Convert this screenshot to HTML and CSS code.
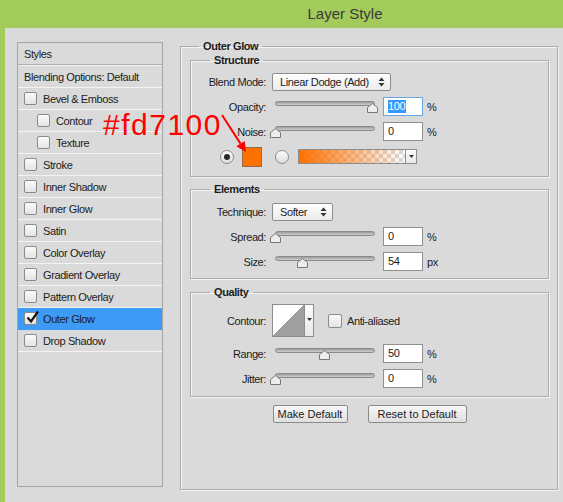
FILE: index.html
```html
<!DOCTYPE html>
<html>
<head>
	<meta charset="utf-8">
	<title>Layer Style</title>
	<link rel="stylesheet" href="styles.css">
</head>
<body>
<div class="window">
	<div class="titlebar">Layer Style</div>

	<div class="frame">
		<!-- effect list -->
		<ul class="styles-list">
			<li class="head">Styles</li>
			<li class="blend">Blending Options: Default</li>
			<li><span class="check"></span>Bevel &amp; Emboss</li>
			<li class="sub"><span class="check"></span>Contour</li>
			<li class="sub"><span class="check"></span>Texture</li>
			<li><span class="check"></span>Stroke</li>
			<li><span class="check"></span>Inner Shadow</li>
			<li><span class="check"></span>Inner Glow</li>
			<li><span class="check"></span>Satin</li>
			<li><span class="check"></span>Color Overlay</li>
			<li><span class="check"></span>Gradient Overlay</li>
			<li><span class="check"></span>Pattern Overlay</li>
			<li class="selected">
				<span class="check"><svg class="tick" width="15" height="15" viewBox="0 0 15 15"><path d="M2.5 7.5 L6 11.5 L13 1.5" fill="none" stroke="#161616" stroke-width="2.2"/></svg></span>Outer Glow
			</li>
			<li><span class="check"></span>Drop Shadow</li>
		</ul>

		<!-- settings -->
		<fieldset class="group main">
			<legend>Outer Glow</legend>

			<fieldset class="group structure">
				<legend>Structure</legend>
				<div class="field">
					<label>Blend Mode:</label>
					<div class="select blend-mode">Linear Dodge (Add)
						<svg class="updown" width="7" height="10" viewBox="0 0 7 10"><path d="M3.5 0.5 L6.5 4 H0.5 Z M3.5 9.5 L6.5 6 H0.5 Z" fill="#333"/></svg>
					</div>
				</div>
				<div class="field">
					<label>Opacity:</label>
					<div class="slider">
						<div class="track"></div>
						<svg class="thumb" style="left:92px" width="11" height="10" viewBox="0 0 11 10"><path d="M5.5 0.5 L10.5 4.5 V9.5 H0.5 V4.5 Z" fill="#ededed" stroke="#777"/></svg>
					</div>
					<div class="num focus"><span class="sel">100</span></div>
					<span class="unit">%</span>
				</div>
				<div class="field">
					<label>Noise:</label>
					<div class="slider">
						<div class="track"></div>
						<svg class="thumb" style="left:-5px" width="11" height="10" viewBox="0 0 11 10"><path d="M5.5 0.5 L10.5 4.5 V9.5 H0.5 V4.5 Z" fill="#ededed" stroke="#777"/></svg>
					</div>
					<div class="num">0</div>
					<span class="unit">%</span>
				</div>
				<div class="field colors">
					<span class="radio on"></span>
					<span class="swatch"></span>
					<span class="radio"></span>
					<div class="gradient">
						<span class="ramp"></span>
						<span class="drop"><svg width="5" height="3" viewBox="0 0 5 3"><path d="M0 0 H5 L2.5 3 Z" fill="#333"/></svg></span>
					</div>
				</div>
			</fieldset>

			<fieldset class="group elements">
				<legend>Elements</legend>
				<div class="field">
					<label>Technique:</label>
					<div class="select technique">Softer
						<svg class="updown" width="7" height="10" viewBox="0 0 7 10"><path d="M3.5 0.5 L6.5 4 H0.5 Z M3.5 9.5 L6.5 6 H0.5 Z" fill="#333"/></svg>
					</div>
				</div>
				<div class="field">
					<label>Spread:</label>
					<div class="slider">
						<div class="track"></div>
						<svg class="thumb" style="left:-5px" width="11" height="10" viewBox="0 0 11 10"><path d="M5.5 0.5 L10.5 4.5 V9.5 H0.5 V4.5 Z" fill="#ededed" stroke="#777"/></svg>
					</div>
					<div class="num">0</div>
					<span class="unit">%</span>
				</div>
				<div class="field">
					<label>Size:</label>
					<div class="slider">
						<div class="track"></div>
						<svg class="thumb" style="left:22px" width="11" height="10" viewBox="0 0 11 10"><path d="M5.5 0.5 L10.5 4.5 V9.5 H0.5 V4.5 Z" fill="#ededed" stroke="#777"/></svg>
					</div>
					<div class="num">54</div>
					<span class="unit">px</span>
				</div>
			</fieldset>

			<fieldset class="group quality">
				<legend>Quality</legend>
				<div class="field contour-row">
					<label>Contour:</label>
					<div class="contour">
						<span class="curve"></span>
						<span class="drop"><svg width="5" height="3" viewBox="0 0 5 3"><path d="M0 0 H5 L2.5 3 Z" fill="#333"/></svg></span>
					</div>
					<span class="check"></span>
					<span class="check-label">Anti-aliased</span>
				</div>
				<div class="field">
					<label>Range:</label>
					<div class="slider">
						<div class="track"></div>
						<svg class="thumb" style="left:44px" width="11" height="10" viewBox="0 0 11 10"><path d="M5.5 0.5 L10.5 4.5 V9.5 H0.5 V4.5 Z" fill="#ededed" stroke="#777"/></svg>
					</div>
					<div class="num">50</div>
					<span class="unit">%</span>
				</div>
				<div class="field">
					<label>Jitter:</label>
					<div class="slider">
						<div class="track"></div>
						<svg class="thumb" style="left:-5px" width="11" height="10" viewBox="0 0 11 10"><path d="M5.5 0.5 L10.5 4.5 V9.5 H0.5 V4.5 Z" fill="#ededed" stroke="#777"/></svg>
					</div>
					<div class="num">0</div>
					<span class="unit">%</span>
				</div>
			</fieldset>

			<div class="buttons">
				<button class="make">Make Default</button>
				<button class="reset">Reset to Default</button>
			</div>
		</fieldset>
	</div>

	<!-- annotation -->
	<div class="note">#fd7100</div>
	<svg class="note-arrow" width="60" height="60" viewBox="0 0 60 60">
		<path d="M22 15 L40.5 43.6" stroke="#f00" stroke-width="2" fill="none"/>
		<path d="M46 52 L36.3 46.3 L44.7 40.9 Z" fill="#f00"/>
	</svg>
</div>
</body>
</html>
```

FILE: styles.css
```css
* { box-sizing: border-box; }

body { margin: 0; overflow: hidden; background: #dadada; font: 11px "Liberation Sans", Arial, sans-serif; letter-spacing: -0.4px; color: #1c1c1c; }

.window { position: relative; width: 690px; height: 502px; background: #a2cb5b; }
.titlebar { height: 28px; line-height: 28px; text-align: center; font-size: 15px; letter-spacing: 0; color: #3a3a3a; }
.frame { display: flex; align-items: flex-start; margin-left: 5px; height: 474px; padding: 12px 0 0 12px; background: #dadada; }

/* Styles list */
.styles-list { flex: none; list-style: none; margin: 2px 0 0; padding: 0; width: 146px; height: 445px; border: 1px solid #a4a4a4; }
.styles-list li { display: flex; align-items: center; height: 22px; padding-left: 6px; border-bottom: 1px solid #f3f3f3; }
.styles-list .head { border-bottom-color: #adadad; }
.styles-list .blend { height: 23px; border-top: 1px solid #f3f3f3; }
.styles-list .sub { padding-left: 19px; }
.styles-list .selected { background: #3d9bf5; border-bottom-color: #3d9bf5; }

.check { position: relative; flex: none; width: 13px; height: 13px; margin-right: 6px; border: 1px solid #8b8b8b; border-radius: 2px; background: linear-gradient(#fbfbfb, #e4e4e4); }
.check .tick { position: absolute; left: 0; top: -3px; }

/* Group boxes */
fieldset.group { min-width: 0; margin: 0; padding: 0; border: 1px solid #acacac; box-shadow: inset 1px 1px 0 #f4f4f4, 1px 1px 0 #f4f4f4; }
fieldset.group legend { margin-left: 19px; padding: 0 4px; font-weight: bold; line-height: 13px; }
fieldset.main { flex: none; width: 378px; height: 450px; margin-left: 17px; padding: 1px 8px 0 9px; }
fieldset.main > legend { margin-left: 9px; }
fieldset.structure { padding: 2px 0 7px; }
fieldset.elements { margin-top: 6px; padding: 3px 0 4px; }
fieldset.quality { margin-top: 7px; padding: 1px 0 5px; }

.field { display: flex; align-items: center; height: 25px; }
.field label { flex: none; width: 75px; margin-right: 6px; text-align: right; }

.select { display: flex; align-items: center; justify-content: space-between; height: 18px; padding: 0 5px 0 7px; border: 1px solid #8d8d8d; border-radius: 2px; background: linear-gradient(#fdfdfd, #ececec); }
.blend-mode { width: 119px; }
.technique { width: 61px; }

.slider { position: relative; flex: none; width: 105px; height: 12px; margin-left: 3px; }
.track { position: absolute; left: 0; top: 0; width: 100px; height: 5px; border: 1px solid #8a8a8a; border-radius: 3px; background: linear-gradient(#9c9c9c, #cfcfcf); }
.thumb { position: absolute; top: 2px; }

.num { flex: none; width: 40px; height: 19px; margin-left: 3px; padding-left: 4px; line-height: 17px; border: 1px solid #8f8f8f; background: #fff; }
.num.focus { border-color: #6aa5e2; }
.sel { display: inline-block; line-height: 13px; padding-right: 1px; background: #3399ff; color: #fff; }
.unit { margin-left: 4px; }

.colors { padding-left: 29px; }
.radio { position: relative; flex: none; width: 14px; height: 14px; border: 1px solid #8b8b8b; border-radius: 50%; background: linear-gradient(#fbfbfb, #dedede); }
.radio.on::after { content: ""; position: absolute; left: 3px; top: 3px; width: 6px; height: 6px; border-radius: 50%; background: #2b2b2b; }
.swatch { flex: none; width: 20px; height: 20px; margin: 0 13px 0 8px; border: 1px solid #9a6a44; background: #fd7100; }
.gradient { display: flex; flex: none; width: 119px; height: 15px; margin-left: 9px; border: 1px solid #8d8d8d; }
.ramp { flex: 1; background: linear-gradient(to right, #fd7100, rgba(253, 113, 0, 0)), repeating-conic-gradient(#d9d9d9 0 25%, #fff 0 50%) 0 0 / 8px 8px; }
.drop { display: flex; align-items: center; justify-content: center; width: 11px; border-left: 1px solid #8d8d8d; background: linear-gradient(#fdfdfd, #e8e8e8); }

.contour-row { height: 41px; }
.contour { display: flex; flex: none; width: 42px; height: 33px; border: 1px solid #8d8d8d; background: #fff; }
.curve { flex: 1; background: linear-gradient(to top left, #9f9f9f 50%, #fff 50%); }
.contour .drop { width: 9px; align-items: flex-start; padding-top: 13px; }
.contour-row .check { width: 14px; height: 14px; margin: 0 5px 0 14px; }

.buttons { display: flex; justify-content: center; gap: 20px; margin-top: 8px; }
.buttons button { height: 18px; padding: 0; border: 1px solid #8a8a8a; border-radius: 2px; background: linear-gradient(#f8f8f8, #dfdfdf); font: inherit; color: inherit; }
.make { width: 75px; }
.reset { width: 99px; }

/* Annotation laid over the dialog */
.note { position: absolute; left: 103px; top: 110px; font: 30px/30px "Liberation Sans", Arial, sans-serif; letter-spacing: 1.5px; color: #ff0000; }
.note-arrow { position: absolute; left: 200px; top: 100px; }
```
